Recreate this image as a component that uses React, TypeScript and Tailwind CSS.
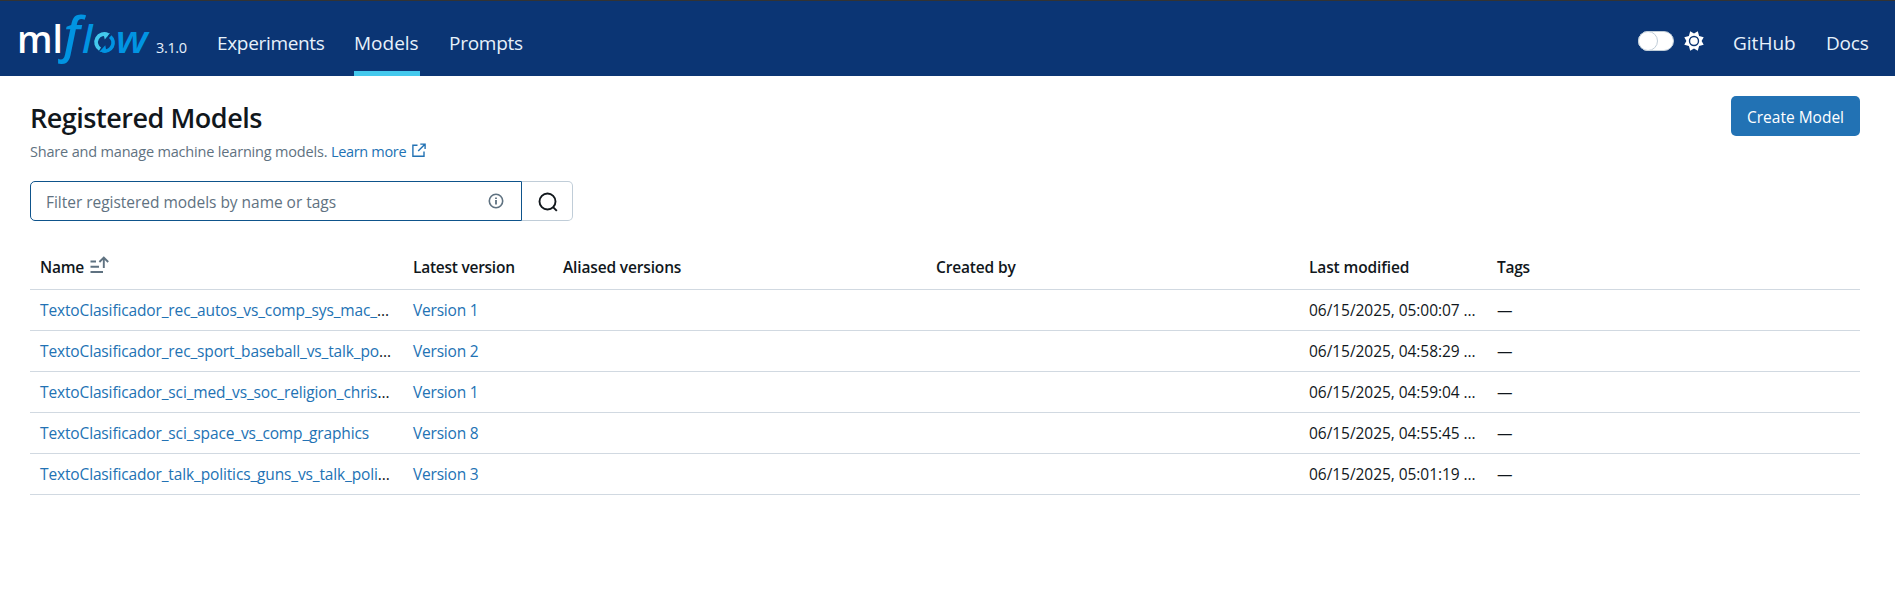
const models = [
  { name: 'TextoClasificador_rec_autos_vs_comp_sys_mac_', cut: true, version: 1, time: '05:00:07' },
  { name: 'TextoClasificador_rec_sport_baseball_vs_talk_po', cut: true, version: 2, time: '04:58:29' },
  { name: 'TextoClasificador_sci_med_vs_soc_religion_chris', cut: true, version: 1, time: '04:59:04' },
  { name: 'TextoClasificador_sci_space_vs_comp_graphics', cut: false, version: 8, time: '04:55:45' },
  { name: 'TextoClasificador_talk_politics_guns_vs_talk_poli', cut: true, version: 3, time: '05:01:19' },
];

const columns = 'grid grid-cols-[373px_150px_373px_373px_188px_373px] border-b border-[#d1d9e1] text-[15.5px]';

function Logo() {
  return (
    <svg className="block shrink-0 overflow-visible" width="134" height="54" viewBox="18 12 134 54" fontFamily="'Open Sans', sans-serif">
      <text x="17" y="53" fontSize="38.5" fontWeight="600" fill="#fff" textLength="46" lengthAdjust="spacingAndGlyphs">ml</text>
      <g fill="#0194e2" fontStyle="italic">
        <text x="63.5" y="52.3" fontSize="49" fontWeight="600">f</text>
        <text x="82" y="53" fontSize="38.5" fontWeight="600">l</text>
        <text x="115.7" y="53" fontSize="38.5" fontWeight="600" textLength="32" lengthAdjust="spacingAndGlyphs">w</text>
      </g>
      <g fill="none" strokeWidth="3.8">
        <path d="M100 49.2A8.2 8.2 0 0 1 108 34.9" stroke="#43c9ed" />
        <path d="M110.2 36.6A8.2 8.2 0 0 1 102.6 50.7" stroke="#0194e2" />
      </g>
      <path d="M104.8 39.5L110 33L103.6 34.5Z" fill="#43c9ed" />
      <path d="M105.3 45.2L99.4 51.8L106.6 52.6Z" fill="#0194e2" />
    </svg>
  );
}

function Sun() {
  return (
    <svg width="20" height="20" viewBox="0 0 20 20" fill="none" stroke="#fff">
      <path
        d="M10 2.4L13.8 .3L15.1 4.9L19.7 6.2L17.6 10L19.7 13.8L15.1 15.1L13.8 19.7L10 17.6L6.2 19.7L4.9 15.1L.3 13.8L2.4 10L.3 6.2L4.9 4.9L6.2 .3Z"
        fill="#fff"
        stroke="none"
      />
      <circle cx="10" cy="10" r="4.5" stroke="#0b3574" strokeWidth="1.4" />
    </svg>
  );
}

export default function App() {
  return (
    <div className="min-h-[593px] bg-white font-['Open_Sans',sans-serif] text-[#11171c]">
      <header className="h-[76px] border-t border-[#333] bg-[#0b3574] text-[#e7f1fb]">
        <div className="flex h-full items-stretch justify-between pr-[26px] pl-[18px]">
          <div className="flex">
            <div className="flex pt-[11px]">
              <Logo />
              <span className="mt-[26px] ml-[4px] w-[61px] text-[14.5px] leading-5 tracking-[-0.35px]">3.1.0</span>
            </div>
            <nav className="flex gap-[29px] text-[19px] leading-[28px]">
              <a className="w-[108px] pt-[28px] tracking-[-0.33px]">Experiments</a>
              <a className="w-[66px] border-b-5 border-[#43c9ed] pt-[28px]">Models</a>
              <a className="pt-[28px] tracking-[-0.25px]">Prompts</a>
            </nav>
          </div>
          <div className="flex text-[19px] leading-[28px]">
            <div className="mt-[30px] mr-[10px] h-5 w-9 rounded-full border border-[#c0cdd8] bg-white">
              <div className="-mt-px -ml-px size-5 rounded-full border border-[#c0cdd8] bg-white" />
            </div>
            <div className="mt-[30px] mr-[29px]">
              <Sun />
            </div>
            <a className="mr-[30px] w-[63px] pt-[28px]">GitHub</a>
            <a className="w-[43px] pt-[28px] tracking-[-0.2px]">Docs</a>
          </div>
        </div>
      </header>

      <main className="pt-5 pr-[35px] pl-[30px]">
        <div className="flex items-start justify-between">
          <h1 className="h-[41px] pt-1 text-[27px] leading-[36px] font-semibold tracking-[-0.48px]">Registered Models</h1>
          <button className="h-10 w-[129px] rounded-[5px] bg-[#2272b4] pt-[3px] text-[15.5px] text-white">Create Model</button>
        </div>
        <div className="flex h-[44px] pt-[4px] text-[14.5px] leading-[22px] tracking-[-0.18px] text-[#5f7281]">
          <span className="w-[301px]">Share and manage machine learning models.</span>
          <a className="flex text-[#2272b4]">
            <span className="w-[81px] tracking-[-0.33px]">Learn more</span>
            <svg className="mt-[2px]" width="14" height="15" viewBox="0 0 14 15" fill="none" stroke="currentColor" strokeWidth="1.4">
              <path d="M5.5 2.2H.9V13.3H12V8.5M8.3 1.1H13.1V5.9M12.9 1.3L6.2 8" />
            </svg>
          </a>
        </div>

        <div className="flex h-10">
          <div className="flex w-[492px] items-center justify-between rounded-l-[5px] border border-[#0e538b] pr-[17px] pl-[15px] text-[15.5px] text-[#5f7281]">
            <span className="pt-[3px] tracking-[-0.03px]">Filter registered models by name or tags</span>
            <svg width="16" height="16" viewBox="0 0 16 16" fill="none" stroke="currentColor" strokeWidth="1.6">
              <circle cx="8" cy="8" r="6.7" />
              <path d="M8 7V11.4M8 4.4V6" strokeWidth="1.8" />
            </svg>
          </div>
          <button className="flex w-[51px] items-center justify-center rounded-r-[5px] border border-l-0 border-[#c0cdd8] pt-px pl-px">
            <svg width="20" height="20" viewBox="0 0 20 20" fill="none" stroke="#11171c" strokeWidth="1.9">
              <circle cx="9.5" cy="9.5" r="8" />
              <path d="M14.8 14.8L18.8 18.8" />
            </svg>
          </button>
        </div>

        <div className="pt-[27px]">
          <div className={`${columns} h-[42px] leading-[22px] font-semibold [&>div]:pt-2 [&>div]:pl-2.5`}>
            <div className="flex">
              <span className="w-[50px] tracking-[-0.25px]">Name</span>
              <svg width="19" height="18" viewBox="0 0 19 18" fill="none" stroke="#5f7281" strokeWidth="1.9">
                <path d="M.5 5.5H6M.5 10.8H9M.5 16H13" />
                <path d="M13.8 12V1.5M9.4 6L13.8 1.6L18.2 6" />
              </svg>
            </div>
            <div className="tracking-[-0.25px]">Latest version</div>
            <div className="tracking-[-0.15px]">Aliased versions</div>
            <div className="tracking-[-0.15px]">Created by</div>
            <div className="tracking-[-0.12px]">Last modified</div>
            <div className="tracking-[-0.3px]">Tags</div>
          </div>
          {models.map((m) => (
            <div key={m.name} className={`${columns} h-[41px] items-center leading-[22px] whitespace-nowrap [&>div]:pb-px [&>div]:pl-2.5`}>
              <div className="tracking-[-0.14px]">
                <a className="text-[#2272b4]">{m.name}</a>
                {m.cut && '…'}
              </div>
              <div className="tracking-[-0.2px] text-[#2272b4]">Version {m.version}</div>
              <div />
              <div />
              <div className="tracking-[-0.05px]">06/15/2025, {m.time} …</div>
              <div>—</div>
            </div>
          ))}
        </div>
      </main>
    </div>
  );
}
